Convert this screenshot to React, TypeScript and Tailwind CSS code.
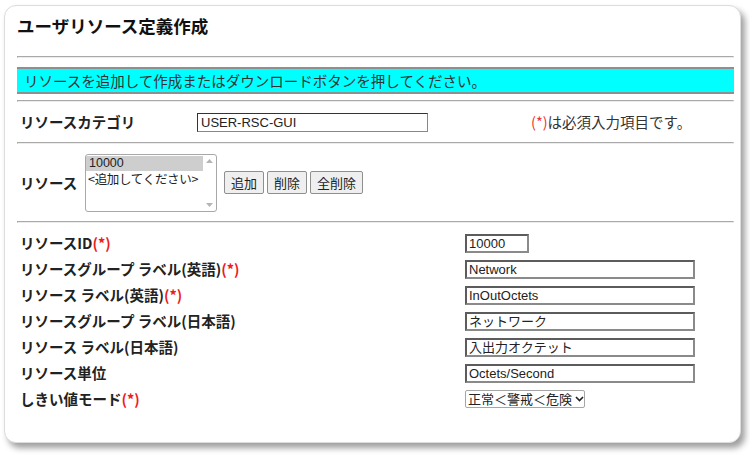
import React from 'react';

const jp = { fontFamily: '"Noto Sans CJK JP", "Liberation Sans", sans-serif' };
const latin = { fontFamily: '"Liberation Sans", "Noto Sans CJK JP", sans-serif' };

const Hr: React.FC<{ className?: string }> = ({ className = '' }) => (
    <div className={`h-[2px] border border-t-[#a9a9a9] border-l-[#a9a9a9] border-b-[#ececec] border-r-[#ececec] ${className}`} />
);

const Req = () => <span className="text-[#ee1c1c] font-bold">(*)</span>;

const TextBox: React.FC<{ value: string; w: string }> = ({ value, w }) => (
    <div
        className={`${w} h-[19px] border-2 border-t-[#5c5c5c] border-l-[#5c5c5c] border-b-[#8a8a8a] border-r-[#8a8a8a] bg-white px-[2px] text-[13px] leading-[15px] text-[#222] whitespace-nowrap overflow-hidden`}
        style={latin}
    >
        {value}
    </div>
);

const fields: { label: React.ReactNode; value: string; short?: boolean }[] = [
    { label: <>リソースID<Req /></>, value: '10000', short: true },
    { label: <>リソースグループ ラベル(英語)<Req /></>, value: 'Network' },
    { label: <>リソース ラベル(英語)<Req /></>, value: 'InOutOctets' },
    { label: <>リソースグループ ラベル(日本語)</>, value: 'ネットワーク' },
    { label: <>リソース ラベル(日本語)</>, value: '入出力オクテット' },
    { label: <>リソース単位</>, value: 'Octets/Second' },
];

export default function App() {
    return (
        <div className="w-[750px] h-[465px] bg-white pt-[5px] pl-[4px]" style={jp}>
            <div className="w-[737px] h-[438px] bg-white rounded-[12px] border border-[#dcdcdc] shadow-[4px_5px_6px_rgba(0,0,0,0.38)] pl-[12px] pr-[6px] pt-[9px]">
                {/* Title */}
                <h1 className="text-[17.5px] leading-[22px] font-bold text-[#111]">ユーザリソース定義作成</h1>

                <Hr className="mt-[19px]" />

                {/* Info banner */}
                <div className="mt-[9px] h-[27px] bg-[#00ffff] border-y-2 border-[#8f8f8f] pl-[7px] text-[14.5px] leading-[23px] text-[#333]">
                    リソースを追加して作成またはダウンロードボタンを押してください。
                </div>

                <Hr className="mt-[6px]" />

                {/* Category */}
                <div className="h-[40px] flex items-center pl-[3px]">
                    <div className="w-[177px] text-[14.5px] font-bold text-[#222]">リソースカテゴリ</div>
                    <div className="w-[231px] h-[19px] border border-[#333] border-r-[#888] border-b-[#888] px-[3px] text-[13px] leading-[17px] text-[#222]" style={latin}>
                        USER-RSC-GUI
                    </div>
                    <div className="ml-[103px] text-[14.5px] text-[#333]">
                        <span className="text-[#ee3333]">(*)</span>は必須入力項目です。
                    </div>
                </div>

                <Hr />

                {/* Resource list */}
                <div className="h-[77px] flex items-center pl-[3px]">
                    <div className="w-[65px] text-[14.5px] font-bold text-[#222]">リソース</div>
                    <div className="w-[132px] h-[58px] border border-[#a8a8a8] rounded-[3px] flex overflow-hidden">
                        <div className="flex-1 min-w-0 text-[12.5px] leading-[15px] text-[#222] pt-[1px] whitespace-nowrap">
                            <div className="bg-[#cecece] pl-[3px]" style={latin}>10000</div>
                            <div className="pl-[2px] tracking-[-0.3px]">&lt;追加してください&gt;</div>
                        </div>
                        <div className="w-[13px] shrink-0 flex flex-col justify-between items-center py-[4px]">
                            <svg width="7" height="4" viewBox="0 0 7 4"><path d="M0 4 L3.5 0 L7 4 Z" fill="#b5b5b5" /></svg>
                            <svg width="7" height="4" viewBox="0 0 7 4"><path d="M0 0 L3.5 4 L7 0 Z" fill="#b5b5b5" /></svg>
                        </div>
                    </div>
                    <div className="ml-[7px] flex gap-[3px]">
                        {['追加', '削除', '全削除'].map((b) => (
                            <button
                                key={b}
                                className="h-[23px] px-[6px] bg-[#efefef] border border-[#8f8f8f] rounded-[2px] text-[13px] leading-[20px] text-[#222]"
                                style={jp}
                            >
                                {b}
                            </button>
                        ))}
                    </div>
                </div>

                <Hr />

                {/* Fields */}
                <div className="mt-[7px]">
                    {fields.map((f, i) => (
                        <div key={i} className="h-[26px] flex items-center pl-[3px]">
                            <div className="w-[445px] text-[14.5px] font-bold text-[#222] whitespace-nowrap">{f.label}</div>
                            <TextBox value={f.value} w={f.short ? 'w-[64px]' : 'w-[230px]'} />
                        </div>
                    ))}
                    <div className="h-[26px] flex items-center pl-[3px]">
                        <div className="w-[445px] text-[14.5px] font-bold text-[#222]">
                            しきい値モード<Req />
                        </div>
                        <div className="w-[120px] h-[18px] border border-[#a6a6a6] rounded-[2px] flex items-center pl-[2px] text-[13px] leading-[16px] text-[#222] whitespace-nowrap overflow-hidden">
                            <span>正常＜警戒＜危険</span>
                            <svg className="ml-[3px] shrink-0" width="9" height="6" viewBox="0 0 9 6">
                                <path d="M1 1 L4.5 4.5 L8 1" fill="none" stroke="#222" strokeWidth="1.6" />
                            </svg>
                        </div>
                    </div>
                </div>
            </div>
        </div>
    );
}
